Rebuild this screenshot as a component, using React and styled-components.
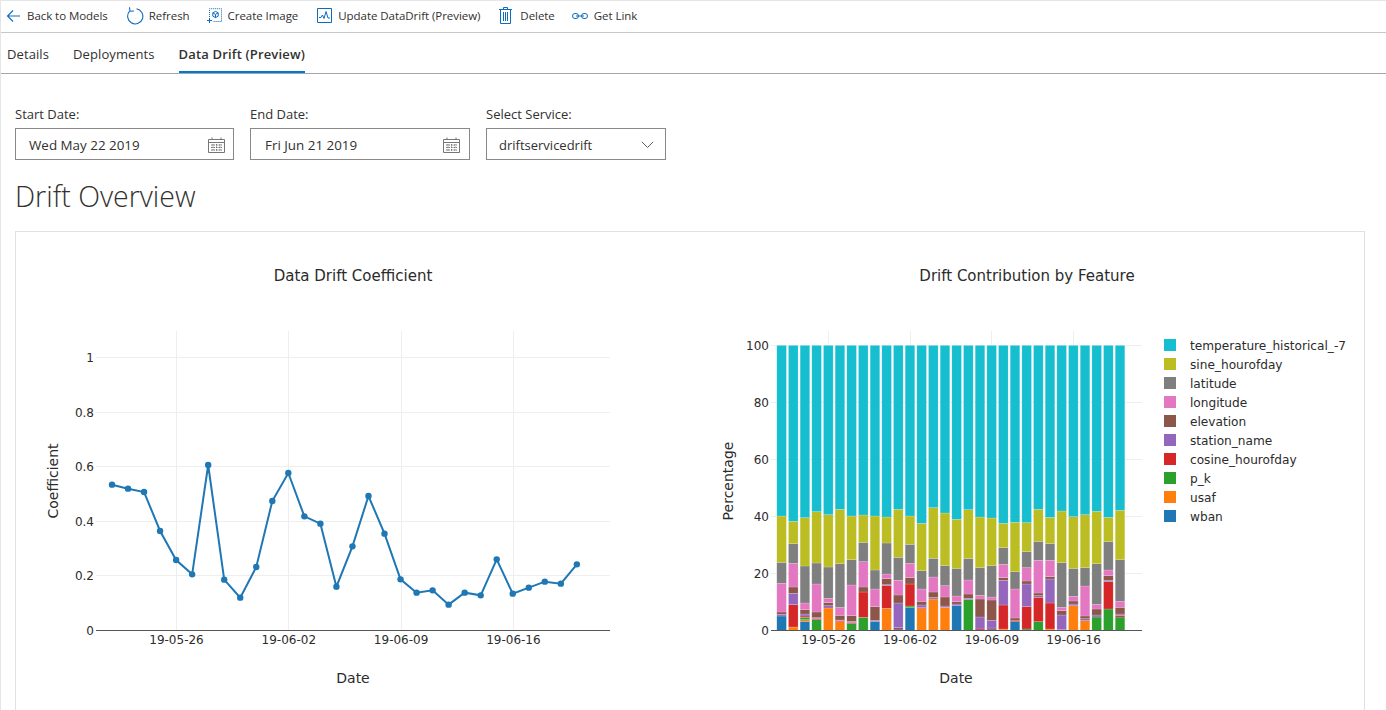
import styled, { createGlobalStyle } from 'styled-components';

const GlobalStyle = createGlobalStyle`
  html, body {
    margin: 0;
    padding: 0;
    background: #fff;
    overflow: hidden;
  }
`;

const Page = styled.div`
  box-sizing: border-box;
  width: 1386px;
  height: 710px;
  overflow: hidden;
  border-top: 1px solid #e6e6e6;
  border-left: 1px solid #e6e6e6;
  font-family: "Open Sans", "Noto Sans", sans-serif;
  color: #323130;
`;

const Toolbar = styled.div`
  display: flex;
  align-items: center;
  height: 29px;
  padding: 0 0 2px 5px;
  border-bottom: 1px solid #c8c8c8;
`;

const ToolItem = styled.div`
  display: flex;
  align-items: center;
  gap: ${p => p.$gap}px;
  margin-right: ${p => p.$after}px;
  font-size: 11.5px;
  letter-spacing: -0.05px;
  white-space: nowrap;
`;

const Tabs = styled.div`
  display: flex;
  height: 40px;
  padding-left: 6px;
  border-bottom: 1px solid #a6a6a6;
`;

const Tab = styled.div`
  display: flex;
  align-items: center;
  box-sizing: border-box;
  height: 40px;
  margin-right: 24px;
  padding-top: 3px;
  font-size: 13px;
  letter-spacing: ${p => (p.$active ? 0.16 : 0.1)}px;
  font-weight: ${p => (p.$active ? 600 : 400)};
  border-bottom: 2px solid ${p => (p.$active ? '#0078d4' : 'transparent')};
`;

const Content = styled.div`
  padding: 32px 0 0 14px;
`;

const Filters = styled.div`
  display: flex;
  gap: 16px;
`;

const Field = styled.div`
  display: flex;
  flex-direction: column;
  width: ${p => p.$width}px;
`;

const FieldLabel = styled.label`
  height: 22px;
  font-size: 13px;
  line-height: 17px;
`;

const Input = styled.div`
  box-sizing: border-box;
  display: flex;
  align-items: center;
  justify-content: space-between;
  height: 32px;
  padding: 1px ${p => p.$right}px 0 ${p => p.$left}px;
  border: 1px solid #8a8886;
  font-size: ${p => p.$size}px;
`;

const Heading = styled.h1`
  margin: 18px 0 16px 0;
  height: 37px;
  font-size: 28.5px;
  line-height: 37px;
  font-weight: 300;
  font-family: "Open Sans", sans-serif;
  color: #323130;
`;

const Card = styled.div`
  display: grid;
  grid-template-columns: 674px 674px;
  box-sizing: border-box;
  width: 1350px;
  height: 520px;
  border: 1px solid #e1e1e1;
`;

const ChartSvg = styled.svg`
  display: block;
  width: 674px;
  height: 480px;
`;

const ChartText = styled.text`
  font-family: "DejaVu Sans", Verdana, sans-serif;
  font-size: ${p => p.$size || 12}px;
  fill: #2b2b2b;
  text-anchor: ${p => p.$anchor || 'middle'};
`;

const GridLine = styled.line`
  stroke: #eeeeee;
  stroke-width: 1;
`;

const AxisLine = styled.line`
  stroke: #555;
  stroke-width: 1;
`;

const blue = '#1f77b4';
const accent = '#0f6cbd';

const colors = {
  w: '#1f77b4',
  o: '#ff7f0e',
  g: '#2ca02c',
  r: '#d62728',
  u: '#9467bd',
  b: '#8c564b',
  p: '#e377c2',
  a: '#7f7f7f',
  y: '#bcbd22',
  c: '#17becf',
};

// tops of the stacked segments, read off the picture (y = 480 + v / 3)
const bars = [
  'w408 u403 b396 p310 a247 y108',
  'o441 r374 u340 b321 p250 a191 y124',
  'w424 o419 g412 r408 u402 b389 p369 a258 y113',
  'g419 r416 u413 b396 p312 a249 y95',
  'o384 u377 b368 p355 a261 y104',
  'o425 r422 u420 b406 p382 a251 y88',
  'g431 r428 u424 b407 p315 a239 y108',
  'g412 r336 b321 p245 a187 y105',
  'w425 u421 b380 p327 a270 y108',
  'o385 r317 u314 b296 p282 a189 y111',
  'w447 r443 u369 b345 p301 a232 y88',
  'w383 g378 r312 b293 p250 a193 y108',
  'o386 r383 u375 b364 p327 a272 y130',
  'o357 u352 b336 p291 a235 y83',
  'o382 u378 b351 p317 a257 y99',
  'w377 u372 b365 p348 a265 y118',
  'g359 u355 b342 p300 a236 y89',
  'r447 u411 b357 p346 a263 y111',
  'w447 r444 u421 b360 p351 a257 y114',
  'o447 r375 u301 b293 p253 a203 y130',
  'w425 r422 b414 p327 a275 y127',
  'g447 r380 u312 b303 p263 a215 y128',
  'g425 r352 u347 b339 p241 a184 y88',
  'o447 r369 u297 b290 p241 a191 y112',
  'r449 u405 b392 p382 a248 y93',
  'o377 u372 b363 p349 a265 y110',
  'o422 u416 b408 p318 a263 y104',
  'g411 u405 b387 p373 a251 y94',
  'g387 r305 u301 b287 p270 a185 y112',
  'g411 r406 u402 b382 p364 a239 y91',
];

const linePoints = [
  464, 476, 486, 603, 690, 733, 405, 749, 803, 711, 513, 429, 559, 581, 770,
  649, 498, 611, 748, 788, 781, 824, 788, 796, 688, 791, 773, 755, 761, 703,
].map((v, i) => [112 + i * 16.03, 330 + v / 3]);

const legend = [
  ['c', 'temperature_historical_-7'],
  ['y', 'sine_hourofday'],
  ['a', 'latitude'],
  ['p', 'longitude'],
  ['b', 'elevation'],
  ['u', 'station_name'],
  ['r', 'cosine_hourofday'],
  ['g', 'p_k'],
  ['o', 'usaf'],
  ['w', 'wban'],
];

const dateTicks = ['19-05-26', '19-06-02', '19-06-09', '19-06-16'];

function BackIcon() {
  return (
    <svg width="15" height="14" viewBox="0 0 15 14" fill="none" stroke={accent} strokeWidth="1.1">
      <path d="M14 7H1.5M7 1.5 1.5 7 7 12.5" />
    </svg>
  );
}

function RefreshIcon() {
  return (
    <svg width="18" height="19" viewBox="0 0 18 19" fill="none" stroke={accent} strokeWidth="1.1">
      <path d="M10.5 2.8A7.6 7.6 0 1 1 3.6 5.2" />
      <path d="M3.5 1.2 4 5.2 8 5" />
    </svg>
  );
}

function CreateImageIcon() {
  return (
    <svg width="15" height="15" viewBox="0 0 15 15" fill="none" stroke={accent} strokeWidth="1">
      <path d="M2.5 9V.7H14.5V13.5H5.5" strokeDasharray="1 1" />
      <path d="M8.5 3.4 11.2 4.8V8.2L8.5 9.6 5.8 8.2V4.8ZM8.5 6.4V9.6M5.8 4.8 8.5 6.4 11.2 4.8" />
      <path d="M0 12.5H5M2.5 10V15" />
    </svg>
  );
}

function UpdateIcon() {
  return (
    <svg width="15" height="15" viewBox="0 0 15 15" fill="none" stroke={accent} strokeWidth="1">
      <path d="M.5.5H14.5V14.5H.5Z" />
      <path d="M2 9.5H4L5.5 7 7 10.5 9 3.5 11 10H13" />
    </svg>
  );
}

function TrashIcon() {
  return (
    <svg width="13" height="17" viewBox="0 0 13 17" fill="none" stroke={accent} strokeWidth="1">
      <path d="M0 2.5H13M4.5 2.5V.5H8.5V2.5M1.5 2.5V16.5H11.5V2.5M4.5 5V14M6.5 5V14M8.5 5V14" />
    </svg>
  );
}

function LinkIcon() {
  return (
    <svg width="16" height="8" viewBox="0 0 16 8" fill="none" stroke={accent} strokeWidth="1">
      <rect x=".5" y="1.5" width="6" height="5" rx="2.5" />
      <rect x="9.5" y="1.5" width="6" height="5" rx="2.5" />
      <path d="M4 4H12" />
    </svg>
  );
}

function CalendarIcon() {
  return (
    <svg width="17" height="16" viewBox="0 0 17 16" fill="none" stroke="#767676" strokeWidth="1">
      <path d="M.5 2.5H16.5V15.5H.5ZM.5 5.5H16.5M4 .5V3M13 .5V3" />
      <path d="M3 8H14M3 10.5H14M3 13H14M5 7V14M8.5 7V14M12 7V14" strokeWidth="1" strokeDasharray="1.6 .9" />
    </svg>
  );
}

function ChevronIcon() {
  return (
    <svg width="13" height="8" viewBox="0 0 13 8" fill="none" stroke="#605e5c" strokeWidth="1">
      <path d="M.8.8 6.5 6.5 12.2.8" />
    </svg>
  );
}

function XTicks({ start, step, y = 644 }) {
  return dateTicks.map((t, i) => (
    <ChartText key={t} x={start + i * step} y={y}>{t}</ChartText>
  ));
}

function CoefficientChart() {
  const yTicks = ['0', '0.2', '0.4', '0.6', '0.8', '1'];
  return (
    <ChartSvg viewBox="16 232 674 480">
      <ChartText $size={15} x={353} y={281}>Data Drift Coefficient</ChartText>
      {[176.5, 288.5, 401.5, 513.5].map(x => (
        <GridLine key={x} x1={x} x2={x} y1={331} y2={630} />
      ))}
      {yTicks.map((t, i) => {
        const y = Math.round(630 - i * 54.54) + 0.5;
        return (
          <g key={t}>
            {i > 0 && <GridLine x1={96} x2={610} y1={y} y2={y} />}
            <ChartText $anchor="end" x={94} y={y + 4}>{t}</ChartText>
          </g>
        );
      })}
      <AxisLine x1={96} x2={610} y1={630.5} y2={630.5} />
      <polyline
        points={linePoints.map(p => p.join(',')).join(' ')}
        fill="none"
        stroke={blue}
        strokeWidth="2"
      />
      {linePoints.map(([x, y]) => (
        <circle key={x} cx={x} cy={y} r="3.2" fill={blue} />
      ))}
      <XTicks start={176.5} step={112.3} />
      <ChartText $size={14} x={353} y={683}>Date</ChartText>
      <ChartText $size={14} transform="translate(58 481) rotate(-90)">Coefficient</ChartText>
    </ChartSvg>
  );
}

function ContributionChart() {
  return (
    <ChartSvg viewBox="690 232 674 480">
      <ChartText $size={15} x={1027} y={281}>Drift Contribution by Feature</ChartText>
      {[828.5, 910.5, 991.5, 1073.5].map(x => (
        <GridLine key={x} x1={x} x2={x} y1={331} y2={630} />
      ))}
      {[0, 20, 40, 60, 80, 100].map((t, i) => {
        const y = Math.round(630 - i * 57) + 0.5;
        return (
          <g key={t}>
            {i > 0 && <GridLine x1={771} x2={1142} y1={y} y2={y} />}
            <ChartText $anchor="end" x={769} y={y + 4}>{t}</ChartText>
          </g>
        );
      })}
      {bars.map((bar, i) => {
        const x = 776.8 + i * 11.67;
        let bottom = 630.4;
        const segments = bar.split(' ').map(s => {
          const top = 480 + Number(s.slice(1)) / 3;
          const seg = { key: s[0], top, height: bottom - top };
          bottom = top;
          return seg;
        });
        segments.push({ key: 'c', top: 345.4, height: bottom - 345.4 });
        return segments.map(seg => (
          <rect
            key={seg.key}
            x={x}
            y={seg.top}
            width="9.6"
            height={seg.height}
            fill={colors[seg.key]}
            stroke="rgba(255,255,255,0.35)"
            strokeWidth="0.5"
          />
        ));
      })}
      <AxisLine x1={771} x2={1142} y1={630.5} y2={630.5} />
      <XTicks start={828.5} step={81.7} />
      <ChartText $size={14} x={956} y={683}>Date</ChartText>
      <ChartText $size={14} transform="translate(733 481) rotate(-90)">Percentage</ChartText>
      {legend.map(([key, name], i) => (
        <g key={key}>
          <rect x={1164} y={339 + i * 19} width="12" height="12" fill={colors[key]} />
          <ChartText $size={12.15} $anchor="start" x={1190} y={350 + i * 19}>{name}</ChartText>
        </g>
      ))}
    </ChartSvg>
  );
}

export default function App() {
  return (
    <Page>
      <GlobalStyle />
      <Toolbar>
        <ToolItem $gap={6} $after={18}><BackIcon />Back to Models</ToolItem>
        <ToolItem $gap={5} $after={17}><RefreshIcon />Refresh</ToolItem>
        <ToolItem $gap={6} $after={19}><CreateImageIcon />Create Image</ToolItem>
        <ToolItem $gap={6} $after={19}><UpdateIcon />Update DataDrift (Preview)</ToolItem>
        <ToolItem $gap={8} $after={17}><TrashIcon />Delete</ToolItem>
        <ToolItem $gap={6} $after={0}><LinkIcon />Get Link</ToolItem>
      </Toolbar>
      <Tabs>
        <Tab>Details</Tab>
        <Tab>Deployments</Tab>
        <Tab $active>Data Drift (Preview)</Tab>
      </Tabs>
      <Content>
        <Filters>
          <Field $width={219}>
            <FieldLabel>Start Date:</FieldLabel>
            <Input $size={13.4} $left={13} $right={8}>Wed May 22 2019<CalendarIcon /></Input>
          </Field>
          <Field $width={220}>
            <FieldLabel>End Date:</FieldLabel>
            <Input $size={13.4} $left={14} $right={9}>Fri Jun 21 2019<CalendarIcon /></Input>
          </Field>
          <Field $width={180}>
            <FieldLabel>Select Service:</FieldLabel>
            <Input $size={13} $left={12} $right={11}>driftservicedrift<ChevronIcon /></Input>
          </Field>
        </Filters>
        <Heading>Drift Overview</Heading>
        <Card>
          <CoefficientChart />
          <ContributionChart />
        </Card>
      </Content>
    </Page>
  );
}
